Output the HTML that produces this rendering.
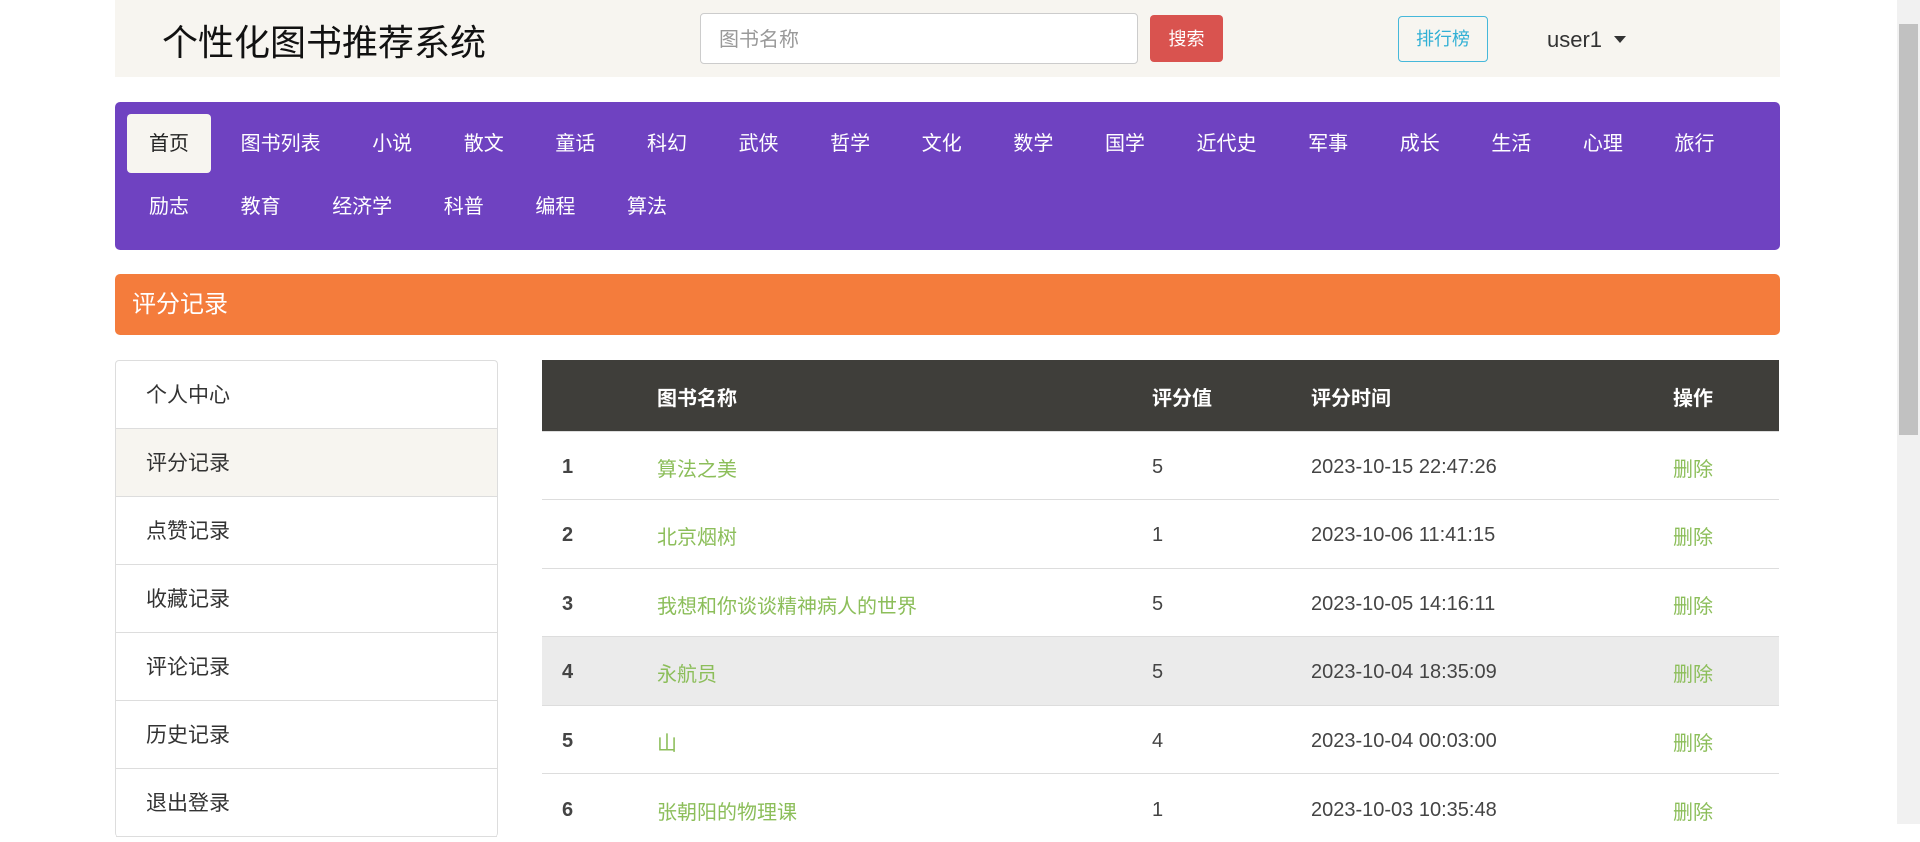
<!DOCTYPE html>
<html><head><meta charset="utf-8"><style>
*{box-sizing:border-box;margin:0;padding:0}
body{width:1920px;height:824px;overflow:hidden;background:#fff;font-family:"Liberation Sans","Noto Sans CJK SC",sans-serif;color:#333;position:relative}
.a{position:absolute}
.hdr{left:115px;top:0;width:1665px;height:77px;background:#f7f5f0}
.title{left:162px;top:21px;font-size:36px;color:#111;line-height:44px}
.inp{left:700px;top:13px;width:438px;height:51px;border:1px solid #ccc;border-radius:4px;background:#fff;font-size:20px;color:#999;padding:13px 18px;line-height:26px}
.btn{left:1150px;top:15px;width:73px;height:47px;background:#d9534f;border-radius:4px;color:#fff;font-size:18px;text-align:center;line-height:48px}
.rank{left:1398px;top:16px;width:90px;height:46px;border:1px solid #46b8da;border-radius:4px;color:#31b0d5;font-size:18px;text-align:center;line-height:45px}
.user{left:1547px;top:25px;font-size:22px;color:#333;line-height:30px}
.caret{left:1614px;top:36px;width:0;height:0;border-left:6px solid transparent;border-right:6px solid transparent;border-top:7px solid #333}
.nav{left:115px;top:102px;width:1665px;height:148px;background:#6f42c1;border-radius:5px;padding:12px 12px}
.nav span{float:left;height:59px;line-height:61px;padding:0 22px;margin:0 7.6px 4px 0;color:#fff;font-size:20px;border-radius:4px}
.nav span.act{background:#f7f5f0;color:#222}
.org{left:115px;top:274px;width:1665px;height:61px;background:#f47c3c;border-radius:5px;color:#fff;font-size:24px;line-height:62px;padding-left:17px}
.side{left:115px;top:360px;width:383px;border:1px solid #ddd;border-radius:4px;border-bottom:none}
.side div{height:68px;line-height:70px;padding-left:30px;font-size:21px;color:#333;border-bottom:1px solid #ddd}
.side div.act{background:#f7f5f0}
table{position:absolute;left:542px;top:360px;width:1237px;border-collapse:collapse;font-size:20px}
th{background:#3f3e3a;color:#fff;height:71px;text-align:left;font-weight:bold;padding-top:2px}
td{height:68.5px;border-top:1px solid #ddd;color:#444;padding-top:4px}
td a{color:#8cbe5a}
tr.g td{background:#ebebeb}
.sb{left:1897px;top:0;width:23px;height:824px;background:#f1f1f1}
.th{left:1899px;top:24px;width:19px;height:411px;background:#c1c1c1}
</style></head><body>
<div class="a hdr"></div>
<div class="a title">个性化图书推荐系统</div>
<div class="a inp">图书名称</div>
<div class="a btn">搜索</div>
<div class="a rank">排行榜</div>
<div class="a user">user1</div>
<div class="a caret"></div>
<div class="a nav">
<span class="act">首页</span><span>图书列表</span><span>小说</span><span>散文</span><span>童话</span><span>科幻</span><span>武侠</span><span>哲学</span><span>文化</span><span>数学</span><span>国学</span><span>近代史</span><span>军事</span><span>成长</span><span>生活</span><span>心理</span><span>旅行</span><span>励志</span><span>教育</span><span>经济学</span><span>科普</span><span>编程</span><span>算法</span>
</div>
<div class="a org">评分记录</div>
<div class="a side">
<div>个人中心</div><div class="act">评分记录</div><div>点赞记录</div><div>收藏记录</div><div>评论记录</div><div>历史记录</div><div>退出登录</div>
</div>
<table>
<colgroup><col style="width:115px"><col style="width:495px"><col style="width:159px"><col style="width:362px"><col></colgroup>
<tr><th></th><th>图书名称</th><th>评分值</th><th>评分时间</th><th>操作</th></tr>
<tr><td style="padding-left:20px"><b>1</b></td><td><a>算法之美</a></td><td>5</td><td>2023-10-15 22:47:26</td><td><a>删除</a></td></tr>
<tr><td style="padding-left:20px"><b>2</b></td><td><a>北京烟树</a></td><td>1</td><td>2023-10-06 11:41:15</td><td><a>删除</a></td></tr>
<tr><td style="padding-left:20px"><b>3</b></td><td><a>我想和你谈谈精神病人的世界</a></td><td>5</td><td>2023-10-05 14:16:11</td><td><a>删除</a></td></tr>
<tr class="g"><td style="padding-left:20px"><b>4</b></td><td><a>永航员</a></td><td>5</td><td>2023-10-04 18:35:09</td><td><a>删除</a></td></tr>
<tr><td style="padding-left:20px"><b>5</b></td><td><a>山</a></td><td>4</td><td>2023-10-04 00:03:00</td><td><a>删除</a></td></tr>
<tr><td style="padding-left:20px"><b>6</b></td><td><a>张朝阳的物理课</a></td><td>1</td><td>2023-10-03 10:35:48</td><td><a>删除</a></td></tr>
</table>
<div class="a sb"></div>
<div class="a th"></div>
</body></html>
